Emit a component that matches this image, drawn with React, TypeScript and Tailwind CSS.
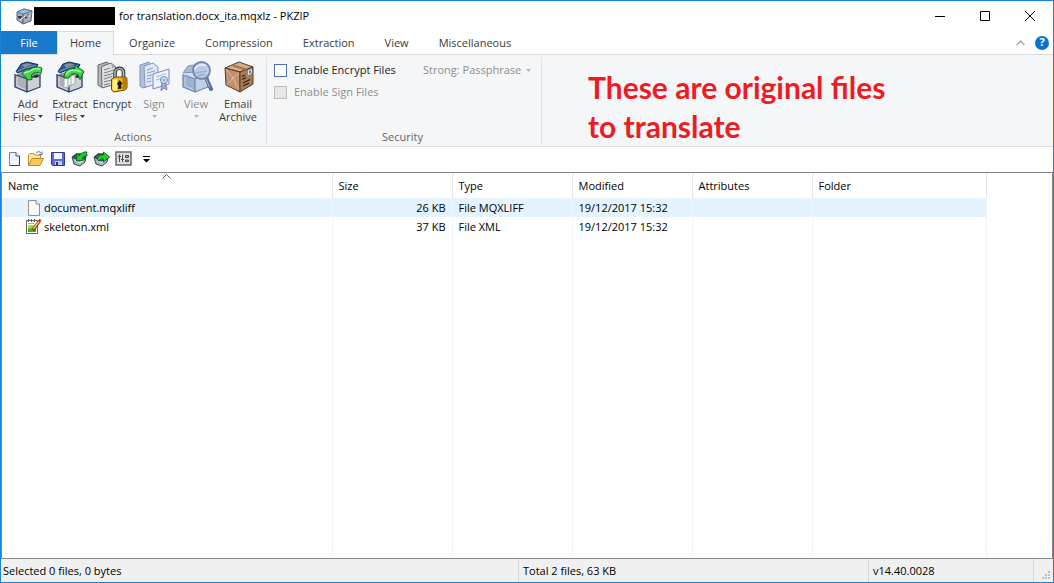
import { useState } from "react"
import type { ReactNode } from "react"

const Box = ({ muted = false }: { muted?: boolean }) => (
  <>
    <path d="M2 14 L14 10 L27 13 L27 26 L14 31 L2 26 Z" fill={muted ? "#b4c2dc" : "#dfe0e3"} />
    <path d="M2 14 L14 18 V31 L2 26 Z" fill={muted ? "#9db0d0" : "#aeb0b5"} />
    <path d="M14 18 L27 14 V26 L14 31 Z" fill={muted ? "#c3cfe4" : "#cfd0d4"} />
    <path d="M2 14 L14 10 L27 13 L14 18 Z" fill={muted ? "#d5deee" : "#8d9097"} />
    <path d="M4 16.500 V25 L12 28.500" fill="none" stroke={muted ? "#c9d5e8" : "#d9dadd"} />
    <path d="M2 13.500 L14 18 V31 M14 18 L27 13.500 M2 13 V26 L14 31 L27 26 V13" fill="none" stroke={muted ? "#7489b6" : "#213f6b"} strokeWidth="1.300" strokeLinejoin="round" />
  </>
)

const Lid = () => (
  <>
    <path d="M3 10.500 L8 3 L14 1 L25 3.500 L24 5.500 L14 8 L5 12 Z" fill="#2f5c95" stroke="#14335d" strokeLinejoin="round" />
    <path d="M9 4 L14 2.200 L20 3.400 L11 6.500 Z" fill="#8c929b" />
    <path d="M4.500 10.500 L12 7 L23 4.500" fill="none" stroke="#7ba3cd" />
  </>
)

const AddIcon = () => (
  <svg width="32" height="32" viewBox="0 0 32 32">
    <Box />
    <Lid />
    <path d="M19 15.500 L25 13 L26 16 L22 17 Z" fill="#2b2e33" />
    <path d="M8.500 12 L15 7.500 L15.500 9.500 C20 5.500 25 5.500 29 7 L28 12.500 C24 10.500 20 12 18.500 14 L19 18.500 L15 19 Z" fill="#3fd34a" stroke="#0a6d17" strokeLinejoin="round" />
    <path d="M11 12 L16 10.500 C20 7.500 24 7 27.500 8" fill="none" stroke="#a6f2a3" strokeWidth="1.500" />
  </svg>
)

const ExtractIcon = () => (
  <svg width="32" height="32" viewBox="0 0 32 32">
    <Box />
    <Lid />
    <path d="M19 16 L25 13 L26 16 L22 17 Z" fill="#2b2e33" />
    <path d="M9 17 L16 15 V25 L9 27 Z M13 16 L20 14 V23 L13 25 Z" fill="#f4f5f6" stroke="#a6abb2" />
    <path d="M9 17 C9 10 14 6.500 20 7.500 L20 4 L29 10.500 L25 18.500 L23 13.500 C18 11.500 15 13.500 14 17 Z" fill="#3fd34a" stroke="#0a6d17" strokeLinejoin="round" />
    <path d="M11 14 C13 9.500 17 8.500 22 9.500 L26 11" fill="none" stroke="#a6f2a3" strokeWidth="1.500" />
  </svg>
)

const EncryptIcon = () => (
  <svg width="32" height="32" viewBox="0 0 32 32">
    <path d="M1 4 L10 1 L14 5 V23 L4 26 L1 24 Z" fill="#b3b6ba" stroke="#65696f" />
    <path d="M4.500 5.500 L14 2 L19 6 V23 L5 27 Z" fill="#dfe1e3" stroke="#64686e" />
    <path d="M14 2 L15 7.500 L19 6 Z" fill="#a2a6ab" />
    <path d="M7 9 L13 7 M7 12 L17 9 M7 15 L16 12.500 M7 18 L15 15.500 M7 21 L15 19 M7 24 L13 22.500" stroke="#7a7e84" />
    <path d="M18 17 V12 C18 6 26.500 5.500 26.500 11.500 V17" fill="none" stroke="#36383b" strokeWidth="3.600" />
    <path d="M18 17 V12 C18 6.500 26.500 6 26.500 11.500 V17" fill="none" stroke="#b9bcc0" strokeWidth="1.500" />
    <path d="M14.500 18 L18 16 H29 L30 18 V27 L28 29 L17 31 L14.500 29 Z" fill="#efb61c" stroke="#6d4b05" strokeLinejoin="round" />
    <path d="M15.500 19 L20 18 V29 L17 30 L15.500 28.500 Z" fill="#fff08a" />
    <path d="M25.500 17 H29 V27 L25.500 29 Z" fill="#b97c0b" />
    <path d="M22.500 19 L25.500 22.500 L24 24 L24.500 27.500 L21 28 L21.500 24.500 L20 23 Z" fill="#1d1608" />
  </svg>
)

const SignIcon = () => (
  <svg width="32" height="32" viewBox="0 0 32 32">
    <path d="M1 4 L10 1 L13 24 L4 27 L1 25 Z" fill="#b2c0db" stroke="#7e93bd" />
    <path d="M5 5 L14 2 L19 6 V23 L6 26 Z" fill="#dfe6f3" stroke="#8498c0" />
    <path d="M8 9 L14 7 M8 12 L16 10 M8 15 L13 14 M8 18 L12 17 M8 21 L12 20" stroke="#8da0c7" />
    <path d="M14 13 L30 8 V23 L14 28 Z" fill="#edf2fa" stroke="#758bb8" />
    <path d="M17 16 L27 12.500 M17 19 L22 17.500" stroke="#a7b6d4" />
    <path d="M23 21 L22 30 L25 27 L28 29 L26 20 Z" fill="#9cafcf" stroke="#748ab6" />
    <circle cx="25" cy="19" r="3.500" fill="#d1dcee" stroke="#748ab6" />
    <circle cx="25" cy="19" r="1.300" fill="#93a6cb" />
  </svg>
)

const ViewIcon = () => (
  <svg width="32" height="32" viewBox="0 0 32 32">
    <Box muted />
    <path d="M2 12 L7 5 L20 3 L26 6 L13 11 Z" fill="#a9bad8" stroke="#7a8fba" />
    <path d="M25.500 18 L30 28" stroke="#5b6f9d" strokeWidth="4" strokeLinecap="round" />
    <path d="M25 18 L28.500 26" stroke="#b5c3dc" />
    <circle cx="20.500" cy="9.500" r="8.500" fill="#bccbe3" fillOpacity=".9" stroke="#7187b3" strokeWidth="1.800" />
    <path d="M14 8.500 C15 4 21 2.500 25 5" fill="none" stroke="#e3ebf6" strokeWidth="2" />
    <path d="M14 12 L26 10 M17 15 L24 13" stroke="#9dafcf" strokeWidth="1.500" />
  </svg>
)

const EmailIcon = () => (
  <svg width="32" height="32" viewBox="0 0 32 32">
    <path d="M2 7 L16 1 L30 6 L17 11 Z" fill="#d3ad89" stroke="#563a23" strokeLinejoin="round" />
    <path d="M2 7 L17 11 V31 L3 24 Z" fill="#bd9170" stroke="#563a23" strokeLinejoin="round" />
    <path d="M17 11 L30 6 V23 L17 31 Z" fill="#a97c57" stroke="#563a23" strokeLinejoin="round" />
    <path d="M3 8 L10 17 L16 12 M4 24 L10 17 L16 29" fill="none" stroke="#dfbd9c" />
    <path d="M10 4.500 L23 8.500" stroke="#9f7754" strokeWidth="2" />
    <path d="M25.500 9.500 L28.500 8.500 V12 L25.500 13.500 Z" fill="#2c8fc9" stroke="#d6ebf7" />
    <path d="M19 15.500 L22 14 M19 18.500 L23 16.500 M20 22 L27 18.500 M20 25 L26 22" stroke="#2d1d11" strokeWidth="1.300" />
  </svg>
)

const PageIcon = ({ blue = false }: { blue?: boolean }) => (
  <svg width="16" height="16" viewBox="0 0 16 16">
    <path d={blue ? "M3.500 1.500 H10 L13.500 5 V14.500 H3.500 Z" : "M2.500 .5 H10 L13.500 4 V15.500 H2.500 Z"} fill={blue ? "#eef4fd" : "#fafafa"} stroke={blue ? "#6d7f9f" : "#8f8f8f"} />
    <path d={blue ? "M10 1.500 V5 H13.500" : "M10 .5 V4 H13.500"} fill="#fff" stroke={blue ? "#3a4f80" : "#8f8f8f"} />
    {blue && <path d="M13.500 5 V14.500 H4" fill="none" stroke="#2d4273" />}
  </svg>
)

const XmlIcon = () => (
  <svg width="17" height="17" viewBox="0 0 17 17">
    <path d="M1.500 2.500 H12.500 V15.500 H1.500 Z" fill="#fff" stroke="#656565" />
    <path d="M3 7 H11 V14 H3 Z" fill="#a2df3d" />
    <path d="M3 11 L11 9 V14 H3 Z" fill="#4eac16" />
    <path d="M3 5.500 H9" stroke="#a8a8a8" />
    <path d="M3.500 1 V4 M6.500 1 V4 M9.500 1 V4" stroke="#555" />
    <path d="M8 12 L14.500 3" stroke="#6b3d0b" strokeWidth="3" />
    <path d="M8.500 11 L14 3.500" stroke="#ffc34d" strokeWidth="1.500" />
    <path d="M14 3.500 L15.500 1.500" stroke="#c83222" strokeWidth="2.500" />
  </svg>
)

const FolderIcon = () => (
  <svg width="17" height="16" viewBox="0 0 17 16">
    <path d="M1.500 14.500 V4 L3 2.500 H7 L8 4 H13.500 V8" fill="#ffe7a0" stroke="#c08b2b" />
    <path d="M1.500 14.500 L5 7.500 H16.500 L13 14.500 Z" fill="#fbc957" stroke="#c08b2b" />
    <path d="M9 2 C11 0 13 .5 14.500 2.500 M15 .5 V3.500 H12" fill="none" stroke="#506a90" />
  </svg>
)

const SaveIcon = () => (
  <svg width="16" height="16" viewBox="0 0 16 16">
    <path d="M1.500 1.500 H14.500 V14.500 H2.500 L1.500 13.500 Z" fill="#6268d8" stroke="#3038a0" />
    <path d="M4 2 H12 V8 H4 Z" fill="#f3f6ff" />
    <path d="M5 10 H12 V14 H5 Z" fill="#c7cdda" />
    <path d="M6 11 H8 V14 H6 Z" fill="#28308e" />
  </svg>
)

const SmallBoxIcon = ({ out = false }: { out?: boolean }) => (
  <svg width="17" height="16" viewBox="0 0 17 16">
    <path d="M1 6 L5 3 H11 L15 6 L14 11 L9 15 L3 13 Z" fill="#aeb8c6" stroke="#3b4656" strokeLinejoin="round" />
    <path d="M1.500 6.500 L5 3 H11 L15 6.500 L9 10 Z" fill="#4d5a6b" stroke="#25354c" />
    <path d="M4 9 L8 11.500 L13 9.500" fill="none" stroke="#e5eaf2" />
    {out ? (
      <path d="M4.500 9 C4.500 5 7 3.500 10.500 4 V1 L16.500 6 L10.500 11 V8 C8 7.500 7 8 6.500 10 Z" fill="#1fce2e" stroke="#05720f" strokeLinejoin="round" />
    ) : (
      <path d="M5.500 10 L6 3 L8.500 4.500 C10 2 13 .5 16 1 L15 3 C16 3 16.500 4 16 5 C14 4.500 12.500 5.500 11.500 7 L13.500 9 Z" fill="#1fce2e" stroke="#05720f" strokeLinejoin="round" />
    )}
  </svg>
)

const SlidersIcon = () => (
  <svg width="17" height="15" viewBox="0 0 17 15">
    <path d="M1 1 H16 V14 H1 Z" fill="#dcdddf" stroke="#66696e" strokeWidth="1.500" />
    <path d="M4.500 3.500 V11 M7.500 3.500 V11 M3 5.500 H6 M6 8.500 H9" stroke="#4b4e52" />
    <path d="M10.500 4.500 H13.500 V6.500 H10.500 Z M10.500 9 H13.500 V10.500 H10.500 Z" fill="#999" stroke="#4b4e52" />
  </svg>
)

const AppIcon = () => (
  <svg width="17" height="17" viewBox="0 0 17 17">
    <path d="M1 4 L8 1 L16 3 L15 13 L7 16 L1 12 Z" fill="#a7b0ba" stroke="#53657a" />
    <path d="M1 4 L7 6 L16 3 L8 1 Z" fill="#9fc0de" stroke="#567b9f" />
    <path d="M7 6 V16" stroke="#4a5662" />
    <path d="M2 8 L6 8 L5 11 L2 10 M9 8 L13 6 L12 9 L9 11 Z" fill="#303b47" />
    <path d="M4 12 L9 8 L14 8" fill="none" stroke="#eef3f8" />
  </svg>
)

const Caret = ({ className = "" }: { className?: string }) => (
  <svg width="5" height="3" viewBox="0 0 5 3" className={className} fill="currentColor">
    <path d="M0 0 H5 L2.500 3 Z" />
  </svg>
)

const tabs = ["Home", "Organize", "Compression", "Extraction", "View", "Miscellaneous"]

type Action = { id: string; icon: ReactNode; lines: string[]; caret?: boolean; disabled?: boolean }

const actions: Action[] = [
  { id: "add", icon: <AddIcon />, lines: ["Add", "Files"], caret: true },
  { id: "extract", icon: <ExtractIcon />, lines: ["Extract", "Files"], caret: true },
  { id: "encrypt", icon: <EncryptIcon />, lines: ["Encrypt"] },
  { id: "sign", icon: <SignIcon />, lines: ["Sign", ""], caret: true, disabled: true },
  { id: "view", icon: <ViewIcon />, lines: ["View", ""], caret: true, disabled: true },
  { id: "email", icon: <EmailIcon />, lines: ["Email", "Archive"] },
]

const quickTools = [
  { label: "New", icon: <PageIcon blue /> },
  { label: "Open", icon: <FolderIcon /> },
  { label: "Save", icon: <SaveIcon /> },
  { label: "Add files", icon: <SmallBoxIcon /> },
  { label: "Extract files", icon: <SmallBoxIcon out /> },
  { label: "Options", icon: <SlidersIcon /> },
]

const columns = [
  { label: "Name", width: "w-[330px]" },
  { label: "Size", width: "w-[120px]" },
  { label: "Type", width: "w-[120px]" },
  { label: "Modified", width: "w-[120px]" },
  { label: "Attributes", width: "w-[120px]" },
  { label: "Folder", width: "w-[174px]" },
]

const files = [
  { name: "document.mqxliff", size: "26 KB", type: "File MQXLIFF", modified: "19/12/2017 15:32", icon: <PageIcon /> },
  { name: "skeleton.xml", size: "37 KB", type: "File XML", modified: "19/12/2017 15:32", icon: <XmlIcon /> },
]

const TitleBar = () => (
  <header className="flex h-[30px] shrink-0 items-center pl-[15px]">
    <AppIcon />
    <span className="ml-px h-[18px] w-[81px] bg-black" />
    <h1 className="ml-1 whitespace-nowrap text-[11px]">for translation.docx_ita.mqxlz - PKZIP</h1>
    <div className="ml-auto flex h-full">
      <button aria-label="Minimize" className="flex w-[46px] items-center justify-center">
        <svg width="10" height="10" viewBox="0 0 10 10" stroke="#000"><path d="M0 5.500 H10" /></svg>
      </button>
      <button aria-label="Maximize" className="flex w-11 items-center justify-center">
        <svg width="10" height="10" viewBox="0 0 10 10" fill="none" stroke="#000"><path d="M.5 .5 H9.500 V9.500 H.5 Z" /></svg>
      </button>
      <button aria-label="Close" className="flex w-[46px] items-center justify-center">
        <svg width="10" height="10" viewBox="0 0 10 10" stroke="#000"><path d="M0 0 L10 10 M10 0 L0 10" /></svg>
      </button>
    </div>
  </header>
)

const Tabs = ({ active, onChange }: { active: string; onChange: (tab: string) => void }) => (
  <nav className="flex h-6 shrink-0 text-[11px] text-[#3b3b3b]">
    <button className="w-14 border-b border-[#dadbdc] bg-[#1979ca] pt-px text-white">File</button>
    {tabs.map((tab) => (
      <button
        key={tab}
        onClick={() => onChange(tab)}
        className={
          tab === active
            ? "border border-b-0 border-[#dadbdc] bg-[#f5f6f7] px-3"
            : "border-b border-[#dadbdc] px-[15px] pt-px"
        }
      >
        {tab}
      </button>
    ))}
    <div className="flex flex-1 items-center justify-end gap-2.5 border-b border-[#dadbdc] pr-1">
      <button aria-label="Collapse ribbon">
        <svg width="9" height="6" viewBox="0 0 9 6" fill="none" stroke="#aaa" strokeWidth="1.500"><path d="M.5 5 L4.500 1 L8.500 5" /></svg>
      </button>
      <button aria-label="Help" className="flex size-3.5 items-center justify-center rounded-full bg-[#0b72ce] text-[11px] font-bold text-white">?</button>
    </div>
  </nav>
)

const Ribbon = () => (
  <section className="flex h-[92px] shrink-0 border-b border-[#dadbdc] bg-[#f5f6f7] text-[11px] text-[#3b3b3b]">
    <div className="my-0.5 flex flex-col border-r border-[#e2e3e4] pl-1.5 pr-[7px]">
      <div className="flex flex-1 pt-1">
        {actions.map((action) => (
          <button
            key={action.id}
            disabled={action.disabled}
            className={`flex w-[42px] flex-col items-center leading-[13px] ${action.disabled ? "text-[#8d8d8d]" : ""}`}
          >
            <span className="mb-1 ml-0.5">{action.icon}</span>
            {action.lines.map((line, i) => (
              <span key={i} className="flex h-[13px] items-center gap-[3px] whitespace-nowrap">
                {line}
                {action.caret && i === action.lines.length - 1 && <Caret className={action.disabled ? "text-[#b5b5b5]" : ""} />}
              </span>
            ))}
          </button>
        ))}
      </div>
      <div className="h-3.5 text-center leading-[13px] text-[#666]">Actions</div>
    </div>
    <div className="my-0.5 flex w-[275px] flex-col border-r border-[#e2e3e4] pl-[7px] pr-2.5">
      <div className="flex flex-1 items-start justify-between pt-0.5">
        <div>
          <label className="flex h-[22px] items-center gap-[7px] text-[#222]">
            <input type="checkbox" className="size-[13px] appearance-none border border-[#4f6fa5] bg-white checked:bg-[#4f6fa5]" />
            Enable Encrypt Files
          </label>
          <label className="flex h-[22px] items-center gap-[7px] text-[#8d8d8d]">
            <input type="checkbox" disabled className="size-[13px] appearance-none border border-[#bcbcbc] bg-[#e6e6e6]" />
            Enable Sign Files
          </label>
        </div>
        <div className="flex h-[22px] items-center gap-1 text-[#8d8d8d]">
          <select aria-label="Encryption method" disabled className="appearance-none bg-transparent opacity-100">
            <option>Strong: Passphrase</option>
          </select>
          <Caret className="text-[#b5b5b5]" />
        </div>
      </div>
      <div className="h-3.5 text-center leading-[13px] text-[#666]">Security</div>
    </div>
    <p className="whitespace-nowrap pl-[46px] pt-[13px] font-[Lato,sans-serif] text-[30px] font-bold leading-[39px] text-[#ed1c24]">
      These are original files
      <br />
      to translate
    </p>
  </section>
)

const QuickAccess = () => (
  <div className="flex h-[25px] shrink-0 items-center gap-[5px] pb-0.5 pl-1">
    {quickTools.map((tool) => (
      <button key={tool.label} aria-label={tool.label} className="flex w-[17px] justify-center">
        {tool.icon}
      </button>
    ))}
    <button aria-label="Customize toolbar" className="ml-1.5 pt-0.5">
      <svg width="7" height="7" viewBox="0 0 7 7"><path d="M0 0 H7 V1 H0 Z M0 3 H7 L3.500 6.500 Z" /></svg>
    </button>
  </div>
)

const FileTable = () => (
  <main className="flex flex-1 border border-[#828790] bg-white">
    <table className="w-full table-fixed border-collapse text-left text-[11px]">
      <thead>
        <tr className="h-[25px]">
          {columns.map((col) => (
            <th key={col.label} className={`relative border-r border-[#e5e5e5] px-1.5 pt-px font-normal ${col.width}`}>
              {col.label}
              {col.label === "Name" && (
                <svg width="9" height="5" viewBox="0 0 9 5" fill="none" stroke="#666" className="absolute inset-x-0 top-px mx-auto">
                  <path d="M.5 4.500 L4.500 .5 L8.500 4.500" />
                </svg>
              )}
            </th>
          ))}
          <th />
        </tr>
      </thead>
      <tbody>
        {files.map((file, i) => (
          <tr key={file.name} className="h-[19px] leading-[19px]">
            {[
              <span className="flex items-center gap-0.5 pl-[17px]">
                <span className="flex w-[17px] justify-center">{file.icon}</span>
                {file.name}
              </span>,
              file.size,
              file.type,
              file.modified,
              "",
              "",
            ].map((cell, c) => (
              <td
                key={c}
                className={`border-r border-[#edf5ff] px-1.5 ${c === 1 ? "text-right" : ""} ${i === 0 ? "bg-[#e5f3ff]" : ""}`}
              >
                {cell}
              </td>
            ))}
            <td />
          </tr>
        ))}
        <tr className="h-full">
          {columns.map((col) => (
            <td key={col.label} className="border-r border-[#edf5ff]" />
          ))}
          <td />
        </tr>
      </tbody>
    </table>
  </main>
)

const StatusBar = () => (
  <footer className="flex h-[23px] shrink-0 items-center bg-[#f0f0f0] text-[11px]">
    <span className="flex h-full w-[518px] items-center border-r border-[#d7d7d7] pl-0.5 pt-0.5">Selected 0 files, 0 bytes</span>
    <span className="flex h-full flex-1 items-center border-r border-[#d7d7d7] pl-1 pt-0.5">Total 2 files, 63 KB</span>
    <span className="flex h-full w-[165px] items-center border-r border-[#d7d7d7] pl-1 pt-0.5">v14.40.0028</span>
    <span className="flex h-full w-[19px] items-end justify-end p-0.5">
      <svg width="9" height="9" viewBox="0 0 9 9" fill="#bfbfbf">
        <path d="M6 0h2v2h-2z M3 3h2v2h-2z M6 3h2v2h-2z M0 6h2v2h-2z M3 6h2v2h-2z M6 6h2v2h-2z" />
      </svg>
    </span>
  </footer>
)

const App = () => {
  const [activeTab, setActiveTab] = useState("Home")

  return (
    <div className="flex min-h-screen flex-col border border-[#1883d7] bg-white font-['Open_Sans',sans-serif] text-black">
      <TitleBar />
      <Tabs active={activeTab} onChange={setActiveTab} />
      <Ribbon />
      <QuickAccess />
      <FileTable />
      <StatusBar />
    </div>
  )
}

export default App
